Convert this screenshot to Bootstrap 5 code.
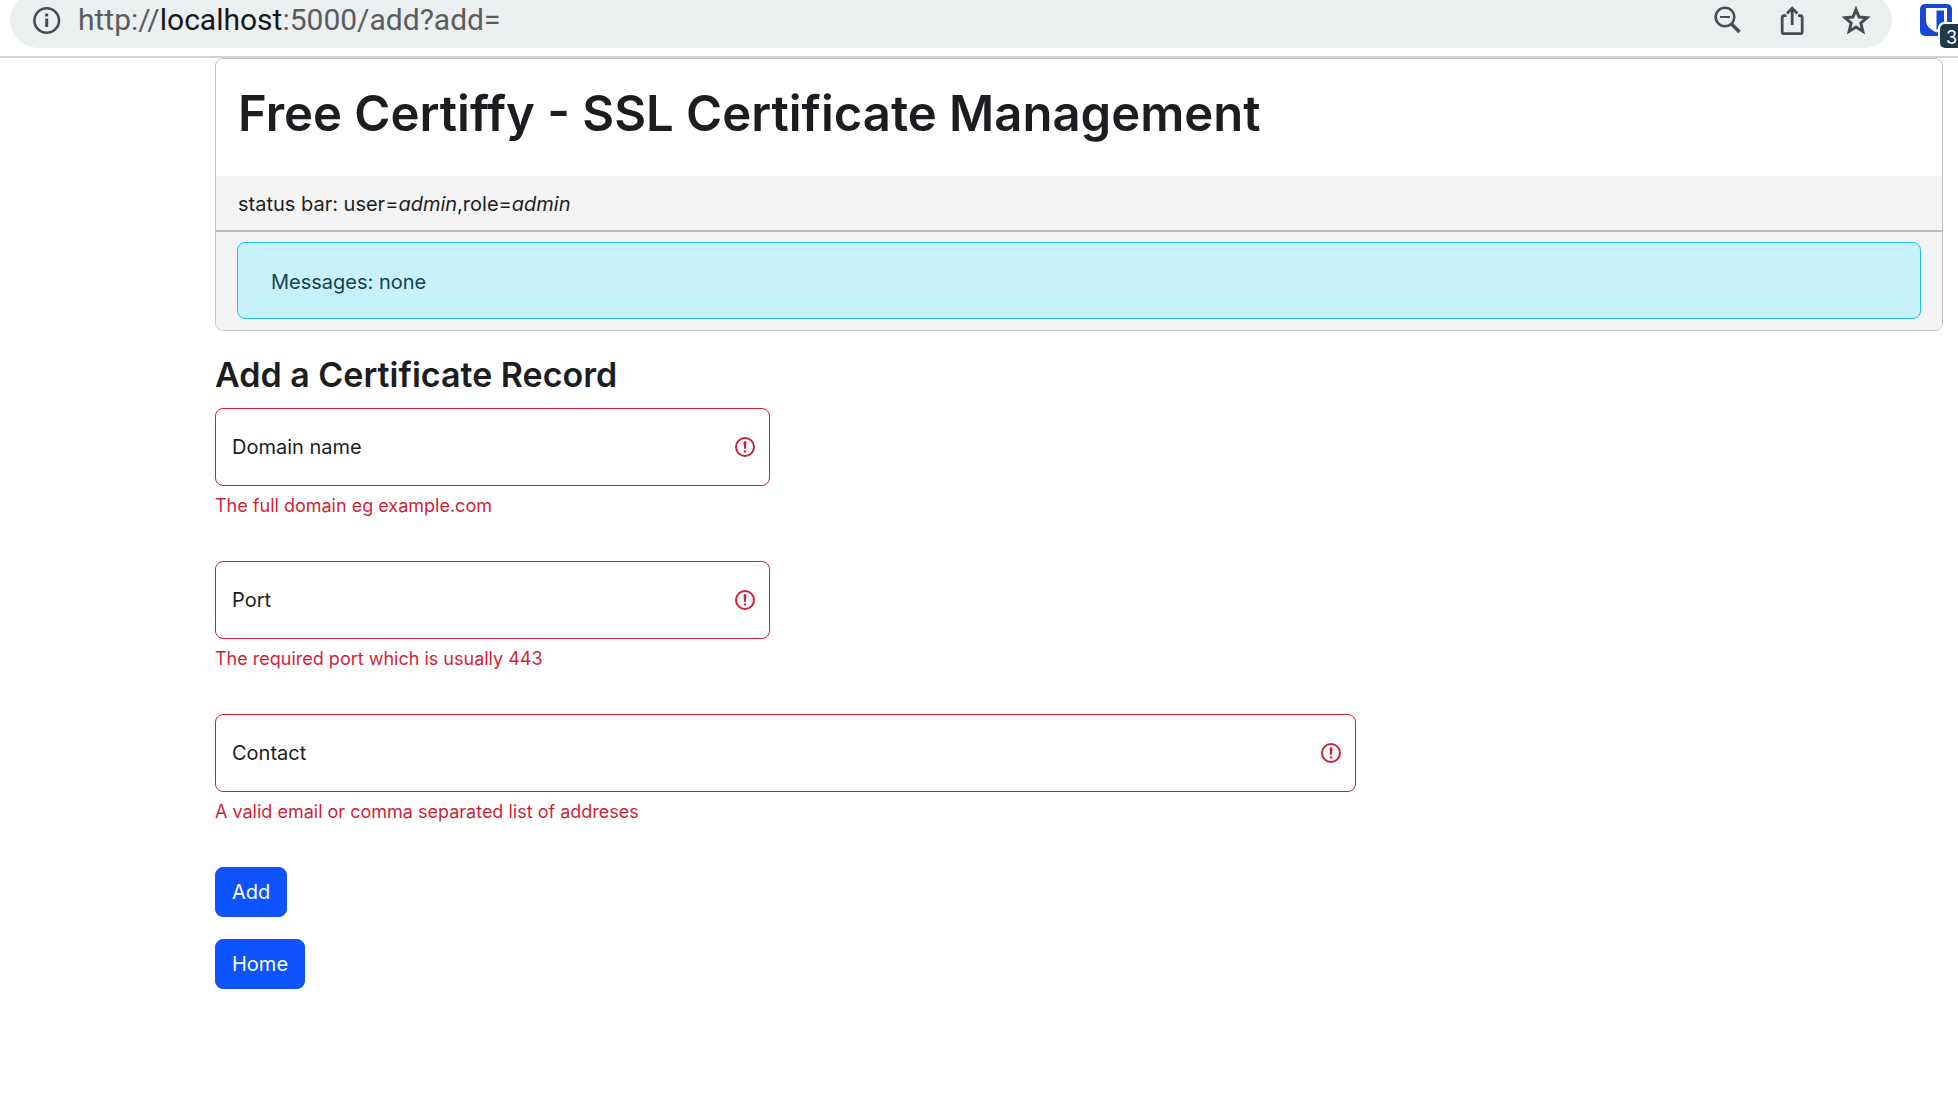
<!DOCTYPE html>
<html lang="en">
<head>
<meta charset="utf-8">
<meta name="viewport" content="width=device-width, initial-scale=1">
<title>Free Certiffy - Add</title>
<link href="https://cdn.jsdelivr.net/npm/bootstrap@5.3.0/dist/css/bootstrap.min.css" rel="stylesheet">
<style>
  body { font-family: Inter, "Liberation Sans", sans-serif; font-size: 20px; line-height: 32px; color: #1c1d21; background: #fff; }

  /* browser address bar, cut by the top of the window */
  .toolbar { height: 58px; border-bottom: 2px solid #d3d3d3; padding-left: 10px; overflow: hidden; }
  .omnibox { height: 56px; margin-top: -8px; padding: 8px 20px 0 22px; border-radius: 28px; background: #ebeff0; color: #4b4c4f; }
  .address { font: 30px/40px Roboto, sans-serif; color: #5b5c5e; margin-left: 16px; }
  .address b { font-weight: 400; color: #17181a; }
  .tool { border: 0; padding: 0; background: none; color: inherit; display: flex; }
  .tools { gap: 36px; }
  .extension { margin-left: 28px; width: 38px; height: 56px; flex: none; }
  .extension .tool { margin-top: 4px; }
  .count { position: absolute; left: 20px; top: 24px; width: 24px; height: 24px; padding-left: 6px; border-radius: 5px 0 0 5px; background: #21394a; color: #fff; font: 18px/27px Inter, sans-serif; box-shadow: -1px -1px 0 1px #fff; }

  .page { padding: 0 15px 40px 215px; }
  .panel { border: 1px solid #c4c4c6; border-radius: 8px; overflow: hidden; }
  .panel-title { padding: 22px 22px 30px; }
  h1, h2 { font-weight: 600; }
  h1 { font-size: 49px; line-height: 65px; margin: 0; }
  h2 { font-size: 34px; line-height: 44px; margin: 22px 0 11px; }
  .status { background: #f4f4f4; padding: 12px 22px 10px; border-bottom: 2px solid #bbb; }
  .messages { background: #f4f4f4; padding: 10px 21px 11px; }
  .notice { margin: 0; padding: 23px 33px 20px; border: 1px solid #21bfe8; border-radius: 8px; background: #c7f1fb; color: #0f4552; }

  .fields { --bs-gutter-x: 32px; }
  .field-block { margin-bottom: 41px; }
  .form-floating > .form-control.entry { height: 78px; padding: 28px 56px 8px 16px; font-size: 20px; border-radius: 8px; border-color: #d11f38; background-size: 24px 24px; background-position: right 12px center;
    background-image: url("data:image/svg+xml,%3csvg xmlns='http://www.w3.org/2000/svg' viewBox='0 0 12 12' fill='none' stroke='%23d11f38'%3e%3ccircle cx='6' cy='6' r='4.5'/%3e%3cpath stroke-linejoin='round' d='M5.8 3.6h.4L6 6.5z'/%3e%3ccircle cx='6' cy='8.2' r='.6' fill='%23d11f38' stroke='none'/%3e%3c/svg%3e"); }
  .form-floating > label { padding: 22px 16px; color: #1c1d21; }
  .invalid-feedback { font-size: 18px; line-height: 28px; margin-top: 6px; color: #d11f38; }
  .btn-primary { --bs-btn-bg: #0f53ff; --bs-btn-border-color: #0f53ff; --bs-btn-font-size: 20px; --bs-btn-line-height: 32px; --bs-btn-padding-x: 16px; --bs-btn-padding-y: 8px; --bs-btn-border-radius: 8px; }
  .actions { gap: 22px; }
</style>
</head>
<body>
<div class="toolbar d-flex">
  <div class="omnibox d-flex flex-grow-1 align-items-start">
    <svg class="mt-1 flex-shrink-0" width="30" height="32" viewBox="0 0 30 32" fill="none" stroke="currentColor" stroke-width="2.6" aria-hidden="true"><circle cx="14.7" cy="16.5" r="12.3"/><path d="M14.7 14.5v8.5" stroke-width="3"/><path d="M14.7 9.5v3" stroke-width="3"/></svg>
    <div class="address flex-grow-1">http://<b>localhost</b>:5000/add?add=</div>
    <div class="tools d-flex">
      <button class="tool" aria-label="Zoom out"><svg width="28" height="40" viewBox="0 0 28 40" fill="none" stroke="currentColor" stroke-width="2.6"><circle cx="11" cy="17" r="9.3"/><path d="M6 17h10" stroke-width="2"/><path d="M17.5 24 25.5 32" stroke-width="3.6"/></svg></button>
      <button class="tool" aria-label="Share"><svg width="28" height="40" viewBox="0 0 28 40" fill="none" stroke="currentColor" stroke-width="2.8"><path d="M8.500 15.700H6.200a2 2 0 0 0-2 2v14a2 2 0 0 0 2 2h16a2 2 0 0 0 2-2v-14a2 2 0 0 0-2-2h-2.300M14.200 25V8.500M9 13.500l5.200-5.300 5.200 5.300"/></svg></button>
      <button class="tool" aria-label="Bookmark"><svg width="30" height="40" viewBox="0 0 30 40" fill="none" stroke="currentColor" stroke-width="3"><path d="M14 9.500l3 7.500 8 .7-6.200 5.300 2 8.200L14 26.900l-6.800 4.300 2-8.200L3 17.700l8-.7z"/></svg></button>
    </div>
  </div>
  <div class="extension position-relative">
    <button class="tool" aria-label="Password manager"><svg width="32" height="32" viewBox="0 0 32 32"><rect width="32" height="32" rx="5" fill="#1747d8"/><path d="M6 4h21v13c0 5-5 9-10.500 11.500C11 26 6 22 6 17z" fill="#fff"/><path d="M16.500 6.500h7.500v11c0 3-3 5.500-7.500 8z" fill="#1747d8"/></svg></button>
    <span class="count">3</span>
  </div>
</div>

<main class="page">
  <header class="panel">
    <div class="panel-title"><h1>Free Certiffy - SSL Certificate Management</h1></div>
    <div class="status">status bar: user=<em>admin</em>,role=<em>admin</em></div>
    <div class="messages"><div class="alert alert-info notice" role="alert">Messages: none</div></div>
  </header>

  <h2>Add a Certificate Record</h2>
  <form>
    <div class="row fields">
      <div class="col-4 field-block">
        <div class="form-floating">
          <input type="text" class="form-control entry is-invalid" id="domain" placeholder="Domain name" aria-describedby="domainHelp">
          <label for="domain">Domain name</label>
        </div>
        <div class="invalid-feedback d-block" id="domainHelp">The full domain eg example.com</div>
      </div>
    </div>
    <div class="row fields">
      <div class="col-4 field-block">
        <div class="form-floating">
          <input type="text" class="form-control entry is-invalid" id="port" placeholder="Port" aria-describedby="portHelp">
          <label for="port">Port</label>
        </div>
        <div class="invalid-feedback d-block" id="portHelp">The required port which is usually 443</div>
      </div>
    </div>
    <div class="row fields">
      <div class="col-8 field-block">
        <div class="form-floating">
          <input type="text" class="form-control entry is-invalid" id="contact" placeholder="Contact" aria-describedby="contactHelp">
          <label for="contact">Contact</label>
        </div>
        <div class="invalid-feedback d-block" id="contactHelp">A valid email or comma separated list of addreses</div>
      </div>
    </div>
    <div class="actions d-flex flex-column align-items-start">
      <button type="submit" class="btn btn-primary">Add</button>
      <a href="#" class="btn btn-primary">Home</a>
    </div>
  </form>
</main>
<script src="https://cdn.jsdelivr.net/npm/bootstrap@5.3.0/dist/js/bootstrap.bundle.min.js"></script>
</body>
</html>
